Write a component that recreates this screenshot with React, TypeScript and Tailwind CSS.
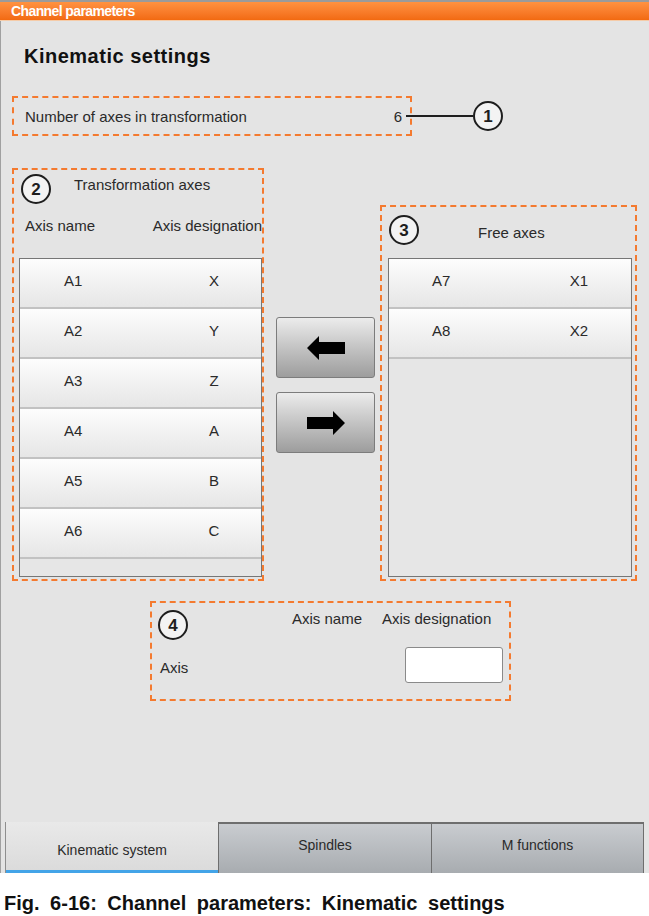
const transformationAxes = [
  { name: "A1", des: "X" },
  { name: "A2", des: "Y" },
  { name: "A3", des: "Z" },
  { name: "A4", des: "A" },
  { name: "A5", des: "B" },
  { name: "A6", des: "C" },
];

const freeAxes = [
  { name: "A7", des: "X1" },
  { name: "A8", des: "X2" },
];

function Marker({ n }: { n: number }) {
  return (
    <div className="w-[30px] h-[30px] shrink-0 rounded-full border-2 border-[#1e1e1e] bg-[#f3f3f3] flex items-center justify-center text-[17px] font-bold leading-none text-[#1e1e1e]">
      {n}
    </div>
  );
}

function AxisTable({
  rows,
  nameWidth,
}: {
  rows: { name: string; des: string }[];
  nameWidth: string;
}) {
  return (
    <div className="h-[319px] border border-[#767676] bg-[#e6e6e6] flex flex-col">
      {rows.map((r) => (
        <div
          key={r.name}
          className="h-[50px] shrink-0 flex items-center pb-[4px] border-b-2 border-[#c2c2c2] bg-linear-to-b from-[#fdfdfd] to-[#e6e6e6]"
        >
          <span className={nameWidth}>{r.name}</span>
          <span className="w-[48px] text-center">{r.des}</span>
        </div>
      ))}
    </div>
  );
}

function Arrow({ dir }: { dir: "left" | "right" }) {
  return (
    <svg width="38" height="24" viewBox="0 0 38 24">
      <path
        d="M0 12 L12 0 L12 6 L38 6 L38 18 L12 18 L12 24 Z"
        fill="#000"
        transform={dir === "right" ? "translate(38 0) scale(-1 1)" : undefined}
      />
    </svg>
  );
}

const App = () => {
  return (
    <div className="w-[649px] h-[916px] bg-white flex flex-col font-['Liberation_Sans',Arial,sans-serif] text-[15px] text-[#2a2a2a]">
      <div className="h-[2px] bg-[#9b9b9b]" />
      <div className="h-[18px] bg-linear-to-b from-[#ff9240] to-[#f26a10] pl-[11px] text-white font-bold text-[14px] tracking-[-0.6px] leading-[18px]">
        Channel parameters
      </div>
      <div className="h-[1px] bg-[#f5cba8]" />

      {/* content */}
      <div className="h-[852px] bg-[#e4e4e4] border-l border-[#a0a0a0] pl-[11px] flex flex-col">
        <div className="mt-[20px] ml-[12px] h-[30px] leading-[30px] text-[20px] font-bold tracking-[0.5px] text-[#111]">
          Kinematic settings
        </div>

        {/* 1 */}
        <div className="mt-[25px] flex items-center">
          <div className="w-[400px] h-[40px] border-2 border-dashed border-[#f47a2f] flex items-center justify-between pl-[11px] pr-[8px] pt-[2px]">
            <span>Number of axes in transformation</span>
            <span>6</span>
          </div>
          <div className="-ml-[6px] w-[67px] h-[2px] bg-[#1e1e1e]" />
          <Marker n={1} />
        </div>

        <div className="mt-[32px] flex items-start">
          {/* 2 */}
          <div className="w-[252px] h-[413px] border-2 border-dashed border-[#f47a2f] flex flex-col">
            <div className="pt-[4px] pl-[7px] flex items-start">
              <Marker n={2} />
              <span className="ml-[23px] mt-[2px] leading-[18px]">Transformation axes</span>
            </div>
            <div className="mt-[13px] h-[18px] leading-[18px] pl-[11px] flex">
              <span className="w-[130px]">Axis name</span>
              <span className="whitespace-nowrap">Axis designation</span>
            </div>
            <div className="mt-[23px] ml-[5px] w-[243px]">
              <AxisTable rows={transformationAxes} nameWidth="w-[170px] pl-[44px]" />
            </div>
          </div>

          {/* move buttons */}
          <div className="ml-[12px] w-[99px] pt-[149px] flex flex-col gap-[14px]">
            {(["left", "right"] as const).map((d) => (
              <div
                key={d}
                className="h-[61px] rounded-[3px] border border-[#7c7c7c] bg-linear-to-b from-[#ececec] to-[#9d9d9d] flex items-center justify-center"
              >
                <Arrow dir={d} />
              </div>
            ))}
          </div>

          {/* 3 */}
          <div className="ml-[5px] mt-[37px] w-[257px] h-[376px] border-2 border-dashed border-[#f47a2f] flex flex-col">
            <div className="pt-[8px] pl-[7px] flex items-start">
              <Marker n={3} />
              <span className="ml-[59px] mt-[9px] leading-[18px]">Free axes</span>
            </div>
            <div className="mt-[13px] ml-[6px] w-[244px]">
              <AxisTable rows={freeAxes} nameWidth="w-[166px] pl-[43px]" />
            </div>
          </div>
        </div>

        {/* 4 */}
        <div className="mt-[20px] ml-[138px] w-[361px] h-[100px] border-2 border-dashed border-[#f47a2f] flex flex-col">
          <div className="pt-[7px] pl-[6px] flex items-start">
            <Marker n={4} />
            <span className="ml-[104px] w-[90px] leading-[18px]">Axis name</span>
            <span className="leading-[18px]">Axis designation</span>
          </div>
          <div className="mt-[7px] flex items-center">
            <span className="w-[253px] pl-[8px] mt-[6px]">Axis</span>
            <div className="w-[98px] h-[36px] bg-white border border-[#8a8a8a] rounded-[3px]" />
          </div>
        </div>

        {/* tabs */}
        <div className="mt-auto -ml-[7px] h-[51px] flex text-[14px]">
          <div className="w-[213px] border-l border-[#8e8e8e] bg-linear-to-b from-[#e9e9e9] to-[#dadada] flex flex-col">
            <div className="flex-1 flex items-start justify-center pt-[19px] leading-[18px]">Kinematic system</div>
            <div className="h-[3px] bg-[#43a4e8]" />
          </div>
          <div className="w-[213px] border-l border-t-2 border-[#6e6e6e] bg-linear-to-b from-[#c9ccd0] to-[#a8acb0] flex justify-center pt-[12px] leading-[18px]">
            Spindles
          </div>
          <div className="w-[213px] border-l border-r border-t-2 border-[#6e6e6e] bg-linear-to-b from-[#c9ccd0] to-[#a8acb0] flex justify-center pt-[12px] leading-[18px]">
            M functions
          </div>
        </div>
      </div>

      {/* caption */}
      <div className="h-[43px] pt-[19px] pl-[4px] leading-[22px] text-[20px] font-bold text-[#111] [word-spacing:5px]">
        Fig. 6-16: Channel parameters: Kinematic settings
      </div>
    </div>
  );
};

export default App;
